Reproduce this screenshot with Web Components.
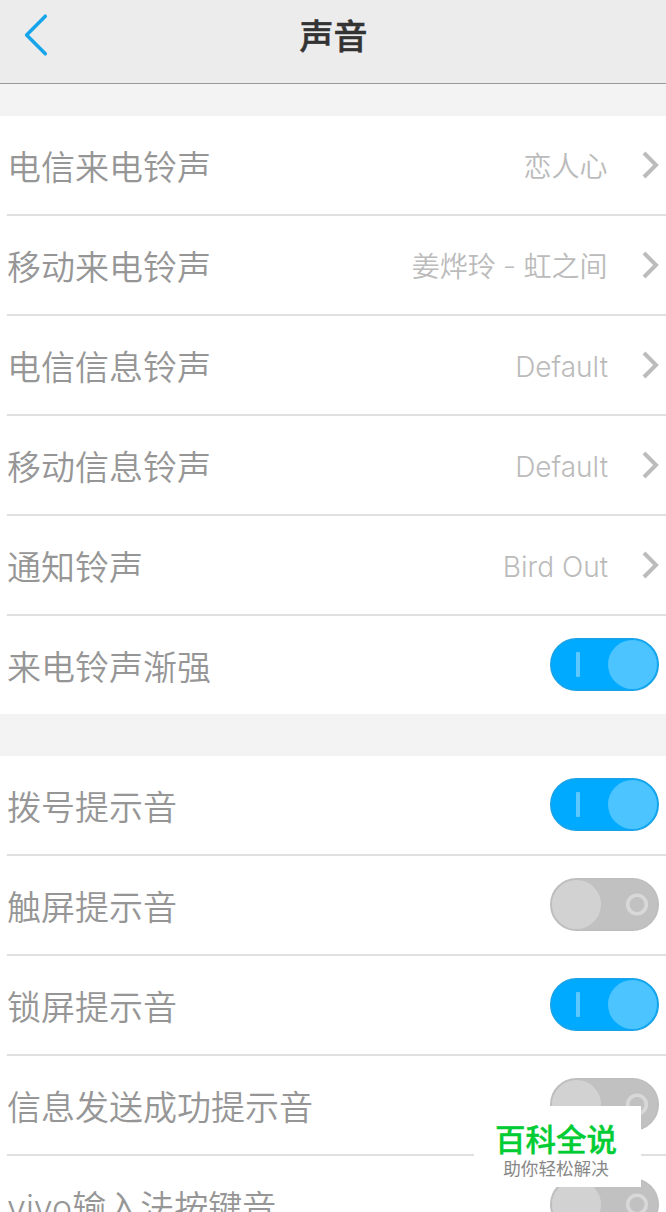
<!DOCTYPE html>
<html lang="zh-CN">
<head>
<meta charset="UTF-8">
<meta name="viewport" content="width=device-width, initial-scale=1.0">
<title>声音</title>
<style>
    body{
        margin:0;
        height:1212px;
        overflow:hidden;
        background:#f3f3f3;
        font-family:Inter, "Noto Sans CJK SC", sans-serif;
    }
    .dash{
        display:inline-block;
        width:12px;
        font-size:18px;
        font-weight:400;
        text-align:center;
        vertical-align:4.5px;
        line-height:1;
    }
</style>
</head>
<body>
<sound-page>
    <nav-bar slot="header">声音</nav-bar>
    <setting-group>
        <setting-row label="电信来电铃声"><link-value>恋人心</link-value></setting-row>
        <setting-row label="移动来电铃声"><link-value>姜烨玲 <span class="dash">–</span> 虹之间</link-value></setting-row>
        <setting-row label="电信信息铃声"><link-value latin>Default</link-value></setting-row>
        <setting-row label="移动信息铃声"><link-value latin>Default</link-value></setting-row>
        <setting-row label="通知铃声"><link-value latin>Bird Out</link-value></setting-row>
        <setting-row label="来电铃声渐强" last><toggle-switch on></toggle-switch></setting-row>
    </setting-group>
    <setting-group>
        <setting-row label="拨号提示音"><toggle-switch on></toggle-switch></setting-row>
        <setting-row label="触屏提示音"><toggle-switch></toggle-switch></setting-row>
        <setting-row label="锁屏提示音"><toggle-switch on></toggle-switch></setting-row>
        <setting-row label="信息发送成功提示音"><toggle-switch></toggle-switch></setting-row>
        <setting-row label="vivo输入法按键音"><toggle-switch></toggle-switch></setting-row>
    </setting-group>
    <corner-badge slot="overlay" title-text="百科全说">助你轻松解决</corner-badge>
</sound-page>

<script>
class BaseElement extends HTMLElement {
    constructor(){
        super();
        this.attachShadow({mode:'open'});
    }
    render(){
        const template = document.createElement('template');
        template.innerHTML = this.getTemplate() + this.getStyles();
        this.shadowRoot.appendChild(template.content.cloneNode(true));
    }
    connectedCallback(){
        if(!this.shadowRoot.childNodes.length) this.render();
    }
}

class SoundPage extends BaseElement {
    getTemplate(){
        return `
        <slot name="header"></slot>
        <main><slot></slot></main>
        <slot name="overlay"></slot>
        `;
    }
    getStyles(){
        return `
        <style>
            :host{
                display:block;
                position:relative;
                height:1212px;
                overflow:hidden;
            }
            main{
                display:flex;
                flex-direction:column;
                gap:42px;
                padding-top:32px;
            }
        </style>
        `;
    }
}

class NavBar extends BaseElement {
    getTemplate(){
        return `
        <svg width="24" height="44" viewBox="0 0 24 44">
            <path d="M21.3 3.2 2.6 22l18.7 18.8" />
        </svg>
        <h1><slot></slot></h1>
        <i></i>
        `;
    }
    getStyles(){
        return `
        <style>
            :host{
                display:grid;
                grid-template-columns:24px 1fr 24px;
                box-sizing:border-box;
                height:84px;
                padding:13px 24px 0;
                background:#ececec;
                border-bottom:1px solid #999;
            }
            svg{
                fill:none;
                stroke:#16a5ea;
                stroke-width:3.5;
                stroke-linecap:round;
                stroke-linejoin:round;
            }
            h1{
                margin:0;
                padding:2px 0 0 1px;
                font-size:34px;
                line-height:44px;
                font-weight:500;
                text-align:center;
                color:#333;
                -webkit-text-stroke:.5px #333;
            }
        </style>
        `;
    }
}

class SettingGroup extends BaseElement {
    getTemplate(){
        return `<slot></slot>`;
    }
    getStyles(){
        return `
        <style>
            :host{
                display:block;
                background:#fff;
            }
        </style>
        `;
    }
}

class SettingRow extends BaseElement {
    getTemplate(){
        return `
        <label>${this.getAttribute('label')}</label>
        <slot></slot>
        `;
    }
    getStyles(){
        return `
        <style>
            :host{
                display:flex;
                align-items:center;
                justify-content:space-between;
                box-sizing:border-box;
                height:100px;
                margin-left:7px;
                padding-right:7px;
                border-bottom:2px solid #e0e0e0;
            }
            :host([last]){
                height:98px;
                border-bottom:none;
            }
            label{
                padding-top:6px;
                font-size:34px;
                line-height:50px;
                font-weight:350;
                color:#969696;
                white-space:nowrap;
            }
        </style>
        `;
    }
}

class LinkValue extends BaseElement {
    getTemplate(){
        return `
        <span><slot></slot></span>
        <svg width="17" height="28" viewBox="0 0 17 28">
            <path d="M2 2 14 14 2 26" />
        </svg>
        `;
    }
    getStyles(){
        return `
        <style>
            :host{
                display:flex;
                align-items:center;
                gap:34.5px;
            }
            span{
                padding-top:4px;
                font-size:28px;
                line-height:40px;
                font-weight:350;
                color:#bbb;
                white-space:nowrap;
            }
            :host([latin]) span{
                font-weight:300;
            }
            :host([latin]){
                gap:34px;
            }
            svg{
                fill:none;
                stroke:#bcbcbc;
                stroke-width:4;
            }
        </style>
        `;
    }
}

class ToggleSwitch extends BaseElement {
    getTemplate(){
        const on = this.hasAttribute('on');
        return on ? `
        <svg width="109" height="53" viewBox="0 0 109 53">
            <rect x=".75" y=".75" width="107.5" height="51.5" rx="25.75" fill="#00aaff" stroke="#1ba2e6" stroke-width="1.5" />
            <rect x="26" y="14" width="4" height="25" rx="1" fill="#5cc8ff" />
            <circle cx="82.5" cy="26.5" r="24.5" fill="#4cc4ff" />
        </svg>` : `
        <svg width="109" height="53" viewBox="0 0 109 53">
            <rect x=".75" y=".75" width="107.5" height="51.5" rx="25.75" fill="#c1c1c1" stroke="#bdbdbd" stroke-width="1.5" />
            <circle cx="87" cy="26.5" r="9.3" fill="none" stroke="#d8d8d8" stroke-width="3.6" />
            <circle cx="26.5" cy="26.5" r="24.5" fill="#d2d2d2" />
        </svg>`;
    }
    getStyles(){
        return `
        <style>
            :host{
                display:block;
                height:53px;
                margin-bottom:1px;
            }
            svg{
                display:block;
            }
        </style>
        `;
    }
}

class CornerBadge extends BaseElement {
    getTemplate(){
        return `
        <strong>${this.getAttribute('title-text')}</strong>
        <small><slot></slot></small>
        `;
    }
    getStyles(){
        return `
        <style>
            :host{
                position:absolute;
                right:25px;
                bottom:25px;
                display:flex;
                flex-direction:column;
                align-items:center;
                box-sizing:border-box;
                width:167px;
                height:81px;
                padding:17px 3px 0 0;
                background:#fff;
            }
            strong{
                font-size:30.5px;
                line-height:34px;
                font-weight:500;
                color:#0c3;
                -webkit-text-stroke:.4px #0c3;
            }
            small{
                font-size:17.6px;
                line-height:24px;
                color:#888;
            }
        </style>
        `;
    }
}

customElements.define('sound-page', SoundPage);
customElements.define('nav-bar', NavBar);
customElements.define('setting-group', SettingGroup);
customElements.define('setting-row', SettingRow);
customElements.define('link-value', LinkValue);
customElements.define('toggle-switch', ToggleSwitch);
customElements.define('corner-badge', CornerBadge);
</script>
</body>
</html>
